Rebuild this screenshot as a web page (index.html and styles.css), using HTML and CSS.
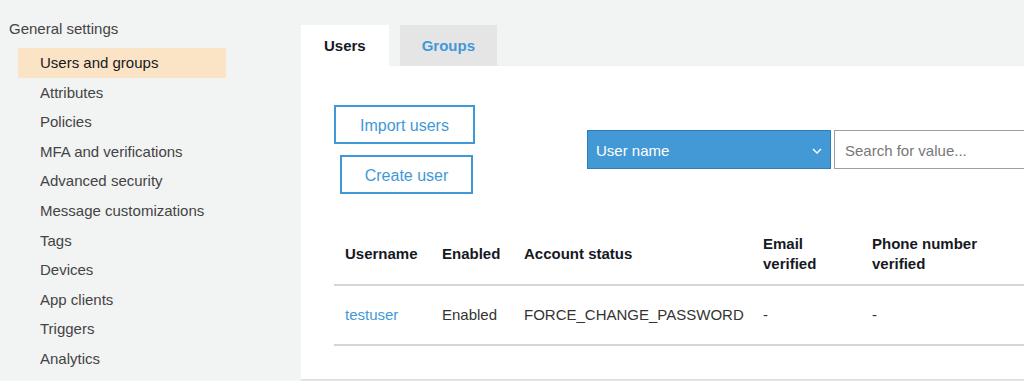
FILE: index.html
```html
<!DOCTYPE html>
<html lang="en">
<head>
    <meta charset="UTF-8">
    <meta name="viewport" content="width=device-width, initial-scale=1.0">
    <title>Users and groups</title>
    <link rel="stylesheet" href="styles.css">
</head>
<body>
    <div class="layout">
        <nav class="sidebar">
            <div class="sidebar-title">General settings</div>
            <ul class="nav">
                <li class="nav-item active">Users and groups</li>
                <li class="nav-item">Attributes</li>
                <li class="nav-item">Policies</li>
                <li class="nav-item">MFA and verifications</li>
                <li class="nav-item">Advanced security</li>
                <li class="nav-item">Message customizations</li>
                <li class="nav-item">Tags</li>
                <li class="nav-item">Devices</li>
                <li class="nav-item">App clients</li>
                <li class="nav-item">Triggers</li>
                <li class="nav-item">Analytics</li>
            </ul>
        </nav>

        <main class="main">
            <div class="tabs">
                <div class="tab tab-active">Users</div>
                <div class="tab">Groups</div>
            </div>
            <div class="panel">
                <div class="toolbar">
                    <div class="actions">
                        <button class="btn btn-import">Import users</button>
                        <button class="btn btn-create">Create user</button>
                    </div>
                    <div class="search">
                        <div class="select">
                            <span>User name</span>
                            <svg class="chevron" width="10" height="6" viewBox="0 0 10 6">
                                <path d="M1 1 L5 5 L9 1" fill="none" stroke="#fff" stroke-width="1.4"/>
                            </svg>
                        </div>
                        <input class="search-input" type="text" placeholder="Search for value...">
                    </div>
                </div>

                <table class="users-table">
                    <thead>
                        <tr>
                            <th class="col-user">Username</th>
                            <th class="col-enabled">Enabled</th>
                            <th class="col-status">Account status</th>
                            <th class="col-email">Email<br>verified</th>
                            <th class="col-phone">Phone number<br>verified</th>
                        </tr>
                    </thead>
                    <tbody>
                        <tr>
                            <td><a class="user-link" href="#">testuser</a></td>
                            <td>Enabled</td>
                            <td>FORCE_CHANGE_PASSWORD</td>
                            <td>-</td>
                            <td>-</td>
                        </tr>
                    </tbody>
                </table>
            </div>
        </main>
    </div>
</body>
</html>
```

FILE: styles.css
```css
:root {
    --page-background: #f2f3f3;
    --text-color: #444;
    --dark-text: #16191f;
    --blue: #3f99d7;
    --highlight: #fbe4c5;
    --border: #d5d5d5;
}

body {
    margin: 0;
    background-color: var(--page-background);
    font-family: "Liberation Sans", Arial, Helvetica, sans-serif;
    font-size: 15px;
    color: var(--text-color);
    overflow: hidden;
}

.layout {
    display: flex;
    height: 381px;
}

.sidebar {
    width: 301px;
    flex-shrink: 0;
    padding-top: 19px;
}

.sidebar-title {
    padding-left: 9px;
    line-height: 20px;
    color: #444;
}

.nav {
    list-style: none;
    margin: 9px 0 0 18px;
    padding: 0;
    width: 208px;
}

.nav-item {
    height: 29.6px;
    line-height: 30.6px;
    padding-left: 22px;
    color: #444;
}

.nav-item.active {
    background-color: var(--highlight);
    color: var(--dark-text);
}

.main {
    flex: 1;
    padding-top: 25px;
    min-width: 0;
    overflow: hidden;
}

.tabs {
    display: flex;
    gap: 11px;
}

.tab {
    height: 41px;
    line-height: 42px;
    padding: 0 23px;
    background-color: #e6e5e6;
    color: var(--blue);
    font-weight: bold;
}

.tab-active {
    background-color: #fff;
    color: var(--dark-text);
}

.tab:nth-child(2) {
    padding: 0 22px;
}

.panel {
    width: 820px;
    height: 313px;
    box-sizing: border-box;
    background-color: #fff;
    padding: 39px 0 0 33px;
    box-shadow: 0 1px 2px rgba(0, 0, 0, 0.15);
}

.toolbar {
    display: flex;
    align-items: center;
}

.actions {
    display: flex;
    flex-direction: column;
    align-items: center;
    gap: 11px;
    width: 141px;
}

.btn {
    background: #fff;
    border: 2px solid var(--blue);
    color: var(--blue);
    font-family: inherit;
    font-size: 16px;
    height: 39px;
    padding: 2px 0 0;
    cursor: pointer;
}

.btn-import {
    width: 141px;
}

.btn-create {
    width: 133px;
    margin-left: 4px;
}

.search {
    display: flex;
    gap: 3px;
    margin-left: 112px;
}

.select {
    display: flex;
    align-items: center;
    justify-content: space-between;
    box-sizing: border-box;
    width: 244px;
    height: 39px;
    padding: 1px 8px 0 8px;
    background-color: #4299d6;
    border: 1px solid #2e7dbb;
    color: #fff;
}

.chevron {
    margin-top: 1px;
}

.search-input {
    box-sizing: border-box;
    width: 260px;
    height: 39px;
    border: 1px solid #9aa0a0;
    padding: 1px 11px 0 10px;
    font-family: inherit;
    font-size: 15px;
    color: #444;
    outline: none;
}

.search-input::placeholder {
    color: #777;
}

.users-table {
    margin-top: 30px;
    border-collapse: collapse;
    table-layout: fixed;
    width: 720px;
}

.users-table th,
.users-table td {
    text-align: left;
    padding: 0 11px;
    line-height: 20px;
    white-space: nowrap;
}

.users-table th {
    color: var(--dark-text);
    font-weight: bold;
    height: 60px;
    border-bottom: 2px solid var(--border);
    vertical-align: middle;
}

.users-table td {
    height: 58px;
    border-bottom: 2px solid var(--border);
    color: #333;
}

.col-user { width: 75px; }
.col-enabled { width: 60px; }
.col-status { width: 217px; }
.col-email { width: 87px; }

.user-link {
    color: var(--blue);
    text-decoration: none;
}
```
